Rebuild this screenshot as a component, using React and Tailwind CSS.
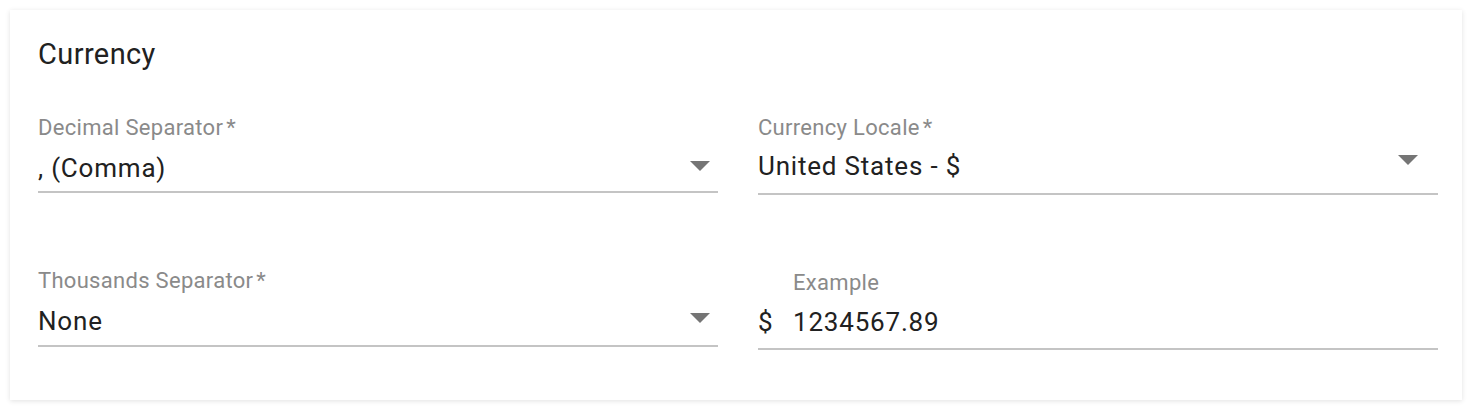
import { useState } from "react";

const FONT = { fontFamily: "Roboto, 'Noto Sans', sans-serif" };

function Caret({ className }) {
  return (
    <svg className={className} width="20" height="10" viewBox="0 0 20 10">
      <path d="M0 0h20L10 10z" fill="#757575" />
    </svg>
  );
}

function FieldLabel({ children, required, className = "" }) {
  return (
    <label className={`block text-[22px] leading-[24px] tracking-[0.3px] text-[#8a8a8a] ${className}`}>
      {children}
      {required && <span className="ml-[3px]">*</span>}
    </label>
  );
}

function SelectField({ label, value, rowClass, valueClass, arrowClass }) {
  return (
    <div className="flex flex-col">
      <FieldLabel required>{label}</FieldLabel>
      <div className={`flex items-start justify-between border-b-2 border-[#c4c4c4] ${rowClass}`}>
        <span className={`text-[26px] leading-[30px] tracking-[0.8px] text-[#212121] ${valueClass}`}>{value}</span>
        <Caret className={arrowClass} />
      </div>
    </div>
  );
}

export default function App() {
  const [decimal] = useState(", (Comma)");
  const [locale] = useState("United States - $");
  const [thousands] = useState("None");

  return (
    <div className="min-h-screen bg-white p-[10px]" style={FONT}>
      <div className="bg-white shadow-[0_1px_5px_rgba(0,0,0,0.12)] pl-[28px] pr-[24px] pt-[28px] pb-[50px]">
        <h2 className="text-[29px] leading-[32px] tracking-[0.4px] text-[#212121]">Currency</h2>

        <div className="grid grid-cols-2 items-start gap-x-[40px] mt-[46px]">
          <SelectField
            label="Decimal Separator"
            value={decimal}
            rowClass="h-[53px]"
            valueClass="mt-[13px]"
            arrowClass="mt-[21px] mr-[8px]"
          />
          <SelectField
            label="Currency Locale"
            value={locale}
            rowClass="h-[55px]"
            valueClass="mt-[11px]"
            arrowClass="mt-[15px] mr-[20px]"
          />
        </div>

        <div className="grid grid-cols-2 items-start gap-x-[40px] mt-[74px]">
          <SelectField
            label="Thousands Separator"
            value={thousands}
            rowClass="h-[54px]"
            valueClass="mt-[13px]"
            arrowClass="mt-[20px] mr-[8px]"
          />
          <div className="flex flex-col mt-[2px]">
            <FieldLabel className="pl-[35px]">Example</FieldLabel>
            <div className="flex items-start border-b-2 border-[#c4c4c4] h-[55px]">
              <span className="mt-[12px] w-[35px] text-[26px] leading-[30px] text-[#212121]">$</span>
              <span className="mt-[12px] text-[26px] leading-[30px] tracking-[0.8px] text-[#212121]">1234567.89</span>
            </div>
          </div>
        </div>
      </div>
    </div>
  );
}
